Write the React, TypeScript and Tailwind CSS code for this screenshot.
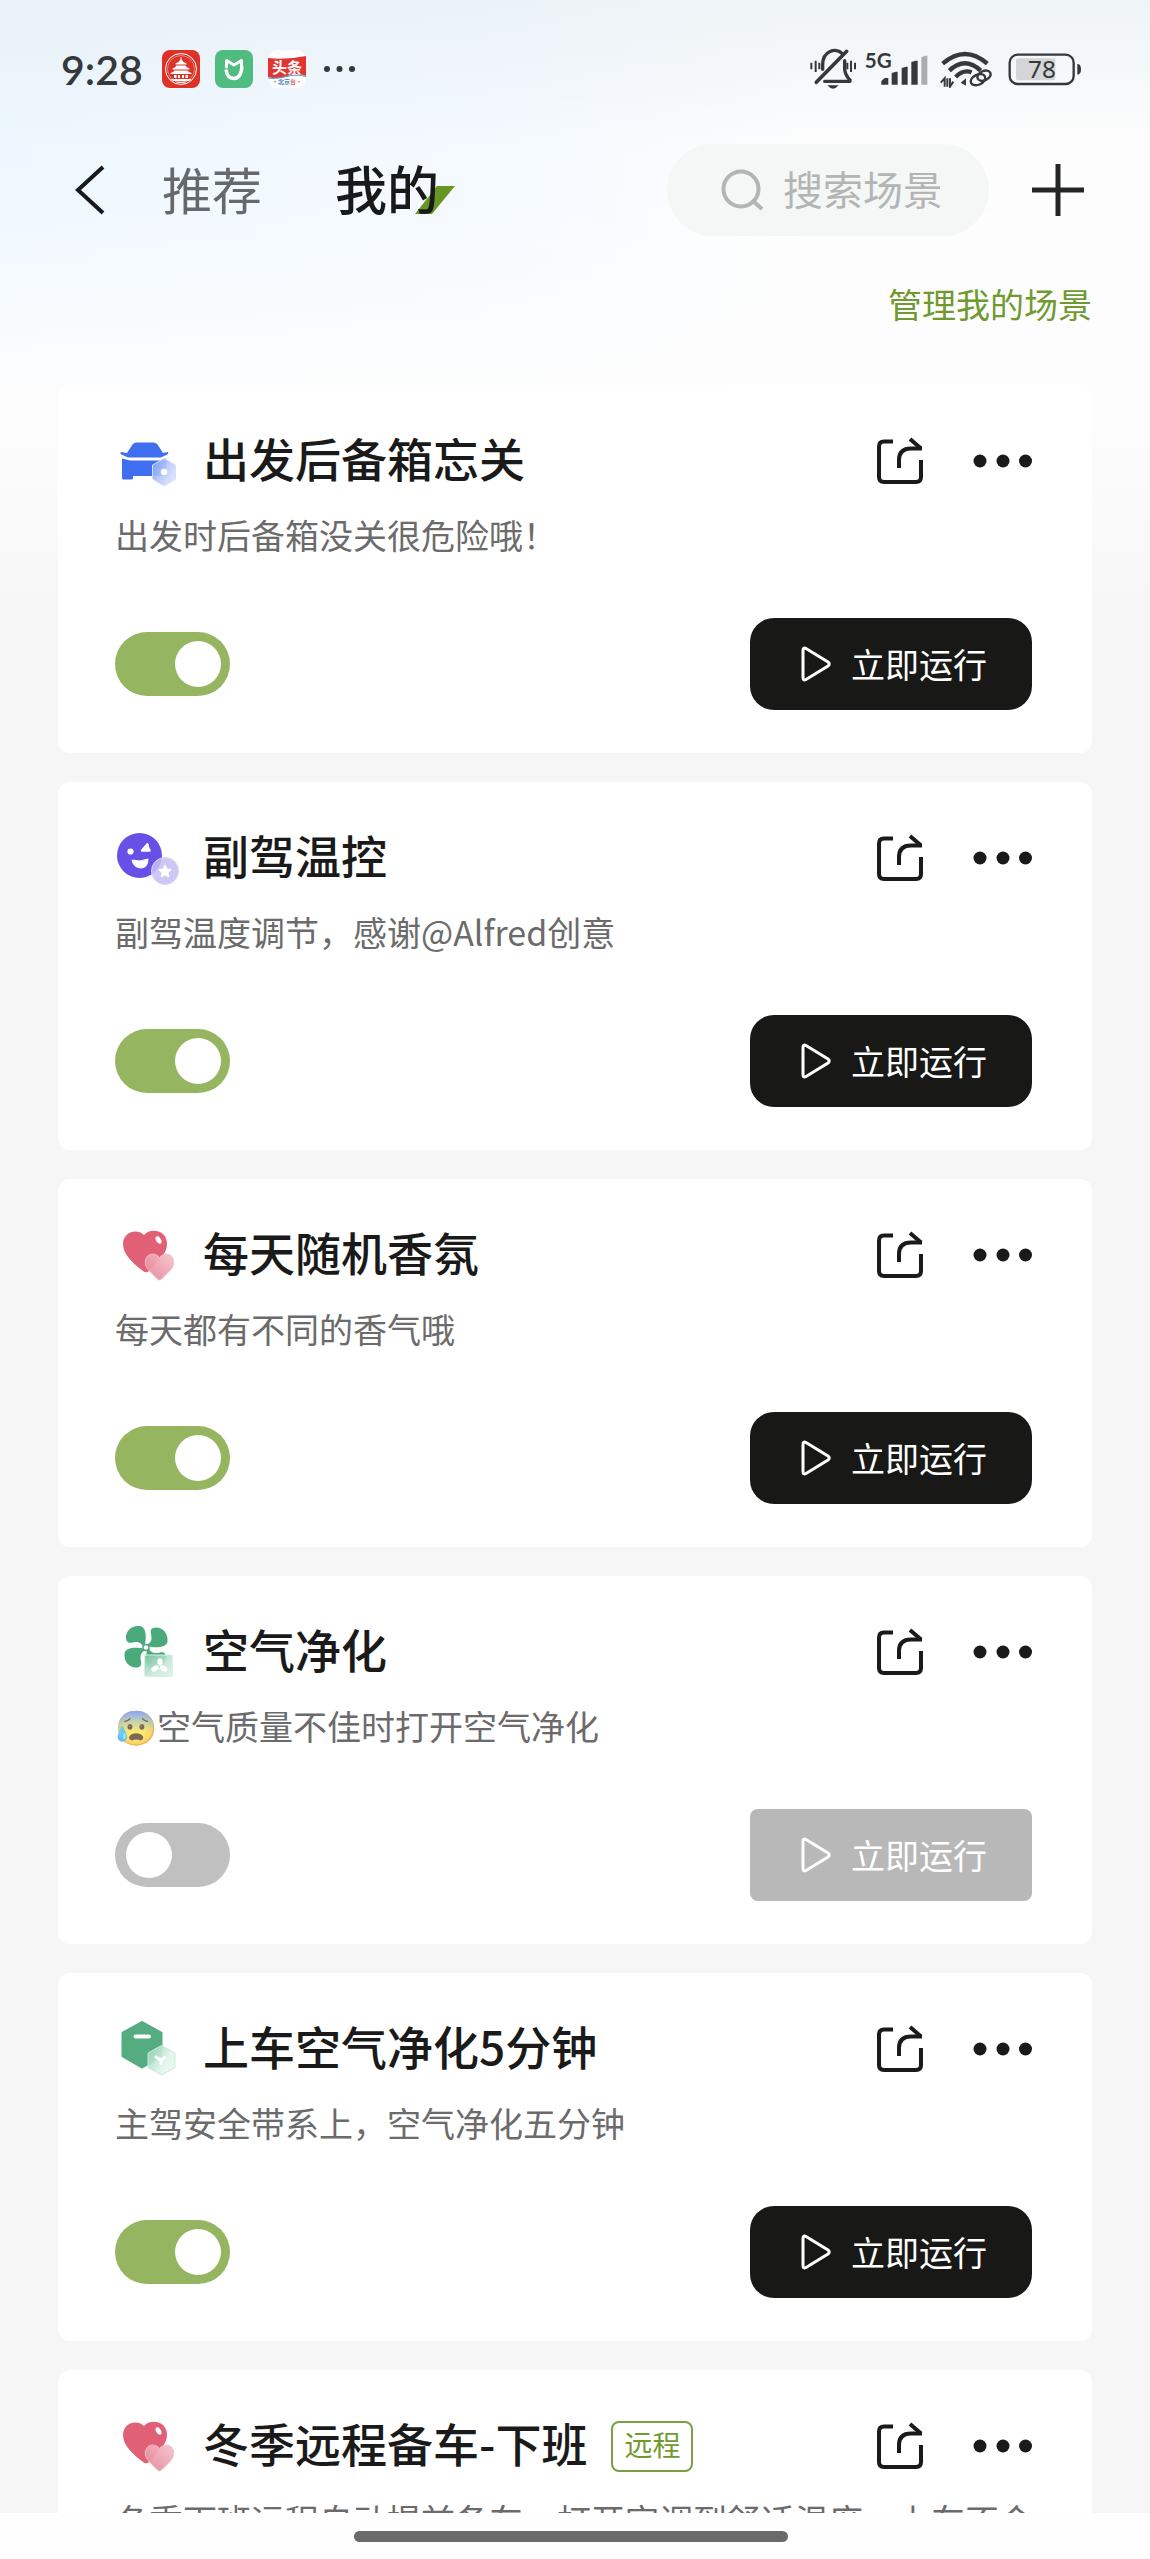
import React from "react";

type IconName = "car" | "face" | "heart" | "fan" | "box";

interface Scene {
  id: number;
  icon: IconName;
  title: string;
  emoji?: string;
  description: string;
  enabled: boolean;
  remote?: boolean;
}

const scenes: Scene[] = [
  { id: 1, icon: "car", title: "出发后备箱忘关", description: "出发时后备箱没关很危险哦！", enabled: true },
  { id: 2, icon: "face", title: "副驾温控", description: "副驾温度调节，感谢@Alfred创意", enabled: true },
  { id: 3, icon: "heart", title: "每天随机香氛", description: "每天都有不同的香气哦", enabled: true },
  { id: 4, icon: "fan", title: "空气净化", emoji: "😰", description: "空气质量不佳时打开空气净化", enabled: false },
  { id: 5, icon: "box", title: "上车空气净化5分钟", description: "主驾安全带系上，空气净化五分钟", enabled: true },
  {
    id: 6,
    icon: "heart",
    title: "冬季远程备车-下班",
    description: "冬季下班远程自动提前备车，打开空调到舒适温度，上车不会",
    enabled: true,
    remote: true,
  },
];

const CarIcon = () => (
  <>
    <defs>
      <linearGradient id="car-badge" x1="0" y1="0" x2="1" y2="0.6">
        <stop offset="0" stopColor="#7ea0f6" />
        <stop offset="0.6" stopColor="#b9c9fa" />
        <stop offset="1" stopColor="#dbe3fd" />
      </linearGradient>
    </defs>
    <path
      fill="#3f6ff0"
      d="M22 9.500h16q4 0 5.500 3.500L48 20l5-1q1 1.600-.8 2.600L46 24.500H13L6.500 21.600q-1.800-1-.8-2.600L12 20l4.500-7q1.500-3.500 5.500-3.500z"
    />
    <path fill="#3f6ff0" d="M7 25.500L15 27.500H44L51.500 25.500V43H18V45q0 1.500-1.500 1.500H8.500Q7 46.500 7 45z" />
    <path
      d="M49 25.500L60.500 32V46L49 53L37.500 46V32z"
      fill="url(#car-badge)"
      fillOpacity="0.92"
      stroke="#d5defc"
      strokeLinejoin="round"
    />
    <circle cx="49" cy="39" r="3.200" fill="#fff" />
  </>
);

const FaceIcon = () => (
  <>
    <circle cx="24.500" cy="25.500" r="22.500" fill="#6650e6" />
    <circle cx="15.500" cy="21.500" r="3.100" fill="#fff" />
    <path d="M33 13.500L27 20.500H35.500" fill="#fff" stroke="#fff" strokeWidth="2.400" strokeLinejoin="round" />
    <path d="M17 30q8 2.500 16-1q0 9-7.500 9Q18.500 37.500 17 30z" fill="#fff" stroke="#fff" strokeLinejoin="round" />
    <circle cx="50" cy="41" r="13.500" fill="#c6bff2" fillOpacity="0.88" stroke="#d8d3f8" />
    <path
      d="M50 35.500l1.700 3.700 4 .5-3 2.800.8 4-3.500-2-3.500 2 .8-4-3-2.800 4-.5z"
      fill="#fff"
      stroke="#fff"
      strokeWidth="1.500"
      strokeLinejoin="round"
    />
  </>
);

const HeartIcon = () => (
  <>
    <defs>
      <linearGradient id="heart-badge" x1="0" y1="1" x2="1" y2="0">
        <stop offset="0" stopColor="#e58397" />
        <stop offset="1" stopColor="#f5c3cd" />
      </linearGradient>
    </defs>
    <path
      fill="#e06176"
      d="M29 8C33 3 43 2 48.500 7.500C53.500 13 53 22 48 28L34 44Q31.500 46.500 28 44C19 37 8 28 8 17C8 5 22 1 29 8z"
    />
    <ellipse cx="43.500" cy="13" rx="2.400" ry="4" fill="#fff" transform="rotate(-32 43.500 13)" />
    <path
      d="M44.500 30.500C48 26 55 26 57.500 30.500C60.500 36 57.500 41 54.500 44L46 52.500Q44.500 53.500 43 52.500L34.500 44C31.500 41 28.500 36 31.500 30.500C34 26 41 26 44.500 30.500z"
      fill="url(#heart-badge)"
      fillOpacity="0.94"
      stroke="#f3bcc7"
    />
  </>
);

const fanBlade =
  "M29.500 22C31.500 16 32 3 25 2C15 1 9 9.500 11.500 16.500C13.500 20.500 17 18 21 18C25 18 27 20 28.500 23z";

const FanIcon = () => (
  <>
    <defs>
      <linearGradient id="fan-badge" x1="0" y1="0" x2="1" y2="1">
        <stop offset="0" stopColor="#7cc5a4" />
        <stop offset="0.6" stopColor="#c9e8da" />
        <stop offset="1" stopColor="#dcf3e9" />
      </linearGradient>
    </defs>
    <g fill="#4aaa7c">
      <path d={fanBlade} />
      <path d={fanBlade} transform="rotate(90 31 23.500)" />
      <path d={fanBlade} transform="rotate(180 31 23.500)" />
      <path d={fanBlade} transform="rotate(270 31 23.500)" />
    </g>
    <circle cx="31" cy="23.500" r="3" fill="#fff" stroke="#4aaa7c" strokeWidth="1.500" />
    <rect
      x="29.500"
      y="31"
      width="28"
      height="21.500"
      rx="1.500"
      fill="url(#fan-badge)"
      fillOpacity="0.9"
      stroke="#d7f1e6"
    />
    <g fill="#fff">
      <ellipse cx="45" cy="38" rx="2.600" ry="3.800" />
      <ellipse cx="40" cy="44.500" rx="2.600" ry="4" transform="rotate(60 40 44.500)" />
      <ellipse cx="48.500" cy="44.500" rx="2.600" ry="4" transform="rotate(-60 48.500 44.500)" />
    </g>
  </>
);

const BoxIcon = () => (
  <>
    <defs>
      <linearGradient id="box-badge" x1="0" y1="0" x2="1" y2="0.700">
        <stop offset="0" stopColor="#8fcfae" />
        <stop offset="0.7" stopColor="#e0f5ea" />
        <stop offset="1" stopColor="#e9f9f1" />
      </linearGradient>
    </defs>
    <path
      d="M27 1.500L46 12V35L27 46L8 35V12z"
      fill="#55ac81"
      stroke="#55ac81"
      strokeWidth="3"
      strokeLinejoin="round"
    />
    <rect x="18.500" y="13.500" width="17.500" height="4" rx="2" fill="#fff" />
    <path
      d="M46.500 24.500L60 32V46.500L46.500 54L33 46.500V32z"
      fill="url(#box-badge)"
      fillOpacity="0.92"
      stroke="#c9ebda"
      strokeLinejoin="round"
    />
    <path d="M41 36l5 3.500 3.500-3M46 39.500v3" fill="none" stroke="#fff" strokeWidth="3" strokeLinecap="round" />
  </>
);

const sceneIcons: Record<IconName, React.FC> = {
  car: CarIcon,
  face: FaceIcon,
  heart: HeartIcon,
  fan: FanIcon,
  box: BoxIcon,
};

const StatusBar = () => (
  <div className="flex h-36 items-center justify-between pr-[69px] pb-1.5 pl-[61px] text-[#35393c]">
    <div className="flex items-center gap-[15px]">
      <span className="mr-1 font-['Lato','Noto_Sans',sans-serif] text-[41px] leading-none font-semibold">9:28</span>
      <svg viewBox="0 0 38 38" className="size-[38px]" aria-hidden="true">
        <rect width="38" height="38" rx="8" fill="#dc3227" />
        <circle cx="19" cy="19" r="15.500" fill="none" stroke="#fff" strokeWidth="1" />
        <circle cx="19" cy="19" r="13.500" fill="none" stroke="#f3b4ae" strokeWidth="0.600" />
        <g fill="#fff">
          <path d="M18.500 7h1v2.500q1 2.500 5 4v1h-11v-1q4-1.500 5-4z" />
          <path d="M14.500 15.500h9q1 2 4 3v1h-17v-1q3-1 4-3z" />
          <path d="M12.500 20.500h13q1 1.500 4 2.500v1h-21v-1q3-1 4-2.500z" />
          <path d="M12 25h2.500v3H12zM16 25h2v3h-2zM20 25h2v3h-2zM23.500 25H26v3h-2.500zM8 29h22l-3 2H11zM12.500 31.800h13q-6 2.500-13 0z" />
        </g>
      </svg>
      <svg viewBox="0 0 38 38" className="size-[38px]" aria-hidden="true">
        <rect width="38" height="38" rx="8" fill="#50bd80" />
        <path
          d="M11.500 17V10.500L19 15L26.500 10.500V17"
          fill="none"
          stroke="#fff"
          strokeWidth="3"
          strokeLinejoin="round"
          strokeLinecap="round"
        />
        <path d="M11 19.500Q12 28.500 19 28.500T27 16" fill="none" stroke="#fff" strokeWidth="3.400" />
      </svg>
      <svg viewBox="0 0 38 38" className="size-[38px]" aria-hidden="true">
        <rect width="38" height="38" rx="9" fill="#fdfdfd" />
        <path d="M0 8Q19 10 38 6V26Q28 22 19 26T0 27z" fill="#e2352f" />
        <path d="M0 28Q10 29 19 26.500T38 26.500" fill="none" stroke="#5c9fd8" strokeWidth="1.200" />
        <text x="19" y="23" textAnchor="middle" fontSize="15" fontWeight="700" fill="#fff">
          头条
        </text>
        <text x="19" y="34" textAnchor="middle" fontSize="6" fontWeight="700" fill="#4a87c4">
          ·北京<tspan fill="#dd6a6a">台·</tspan>
        </text>
      </svg>
      <svg viewBox="0 0 38 8" className="ml-0.5 h-2 w-[38px]" fill="currentColor" aria-hidden="true">
        <circle cx="4" cy="4" r="3" />
        <circle cx="16.500" cy="4" r="3" />
        <circle cx="29" cy="4" r="3" />
      </svg>
    </div>

    <div className="flex items-center gap-2">
      <svg viewBox="42 54 156 126" className="h-[42px] w-[52px] overflow-visible" aria-hidden="true">
        <g fill="none" stroke="currentColor" strokeWidth="10" strokeLinecap="round" strokeLinejoin="round">
          <path d="M98 118V104C98 62 138 52 156 70" />
          <path d="M164 92V118Q166 136 180 150V154H104" />
          <path d="M79 157L170 64" strokeWidth="11" />
        </g>
        <path d="M112 166h34q-17 20-34 0z" fill="currentColor" />
        <path
          d="M64 98V118M77 92V126M88 98V118M172 98V118M183 92V126M195 98V118"
          stroke="currentColor"
          strokeWidth="6"
        />
      </svg>
      <svg
        viewBox="222 45 204 138"
        className="h-[46px] w-[68px] overflow-visible"
        fill="currentColor"
        aria-label="5G"
      >
        <text x="224" y="110" fontSize="62" fontWeight="700" fontFamily="Lato, 'Noto Sans', sans-serif">
          5G
        </text>
        <path d="M274 150L284 141H295V161H274z" />
        <path d="M305 126L318 122H323V161H305z" />
        <path d="M335 111L348 107H353V161H335z" />
        <path d="M364 93L377 89H383V161H364z" />
        <path d="M394 79L406 74H412V161H394z" fill="#a9adae" />
      </svg>
      <svg viewBox="450 60 171 114" className="h-[38px] w-[57px]" aria-hidden="true">
        <g fill="none" stroke="currentColor" strokeWidth="13">
          <path d="M458 101Q525 43 592 101" />
          <path d="M478 122Q525 78 572 122" />
          <path d="M497 141Q520 117 545 127" />
        </g>
        <path d="M512 158L528 145V167z" fill="currentColor" />
        <path d="M452 158L464 145V170M472 145V170M480 145V170L490 155" fill="none" stroke="currentColor" strokeWidth="6" />
        <g fill="none" stroke="currentColor" strokeWidth="7">
          <ellipse cx="564" cy="149" rx="23" ry="15" transform="rotate(-25 564 149)" />
          <ellipse cx="582" cy="137" rx="21" ry="14" transform="rotate(-25 582 137)" />
        </g>
      </svg>
      <svg viewBox="645 66 228 99" className="h-[33px] w-[76px]" aria-label="78%">
        <rect x="678" y="82" width="118" height="66" rx="6" fill="#d3d5d6" />
        <rect x="659" y="71" width="192" height="88" rx="24" fill="none" stroke="currentColor" strokeWidth="7" />
        <path d="M862 99q11 0 11 16t-11 16z" fill="currentColor" />
        <text
          x="756"
          y="141"
          textAnchor="middle"
          fontSize="73"
          fontWeight="400"
          fill="currentColor"
          fontFamily="'Noto Sans', sans-serif"
        >
          78
        </text>
      </svg>
    </div>
  </div>
);

const Header = () => (
  <header className="flex h-[92px] items-center pr-[63px] pl-[72px]">
    <button type="button" aria-label="返回">
      <svg viewBox="0 0 36 50" className="h-[50px] w-9" aria-hidden="true">
        <path d="M31 2L6 25L31 48" fill="none" stroke="#17191a" strokeWidth="4" />
      </svg>
    </button>
    <nav className="ml-[54px] flex items-center gap-[73px] pb-1">
      <button type="button" className="text-[50px] leading-[60px] text-[#66696b]">
        推荐
      </button>
      <button type="button" className="relative text-[52px] leading-[60px] font-medium text-[#17191a]">
        <svg viewBox="0 0 40 28" className="absolute -right-4 bottom-1 h-7 w-10" aria-hidden="true">
          <path d="M22 0H40L17 28H0z" fill="#679624" />
        </svg>
        <span className="relative">我的</span>
      </button>
    </nav>
    <label className="ml-auto flex h-full w-[322px] items-center gap-5 rounded-full bg-[#f5f6f6] pr-6 pl-[54px]">
      <svg
        viewBox="0 0 42 42"
        className="size-[42px] shrink-0"
        fill="none"
        stroke="#b3b4b4"
        strokeWidth="4"
        aria-hidden="true"
      >
        <circle cx="20" cy="20" r="17.500" />
        <path d="M31 31L41 40" />
      </svg>
      <input
        type="search"
        aria-label="搜索场景"
        placeholder="搜索场景"
        className="w-full min-w-0 bg-transparent pb-1 text-[40px] leading-[60px] outline-none placeholder:text-[#b3b4b4]"
      />
    </label>
    <button type="button" aria-label="新建场景" className="ml-10">
      <svg viewBox="0 0 58 58" className="size-[58px]" aria-hidden="true">
        <path d="M29 3V55M3 29H55" stroke="#242626" strokeWidth="5" />
      </svg>
    </button>
  </header>
);

const SceneCard: React.FC<{ scene: Scene }> = ({ scene }) => {
  const [enabled, setEnabled] = React.useState(scene.enabled);
  const Icon = sceneIcons[scene.icon];

  return (
    <article className="shrink-0 rounded-xl bg-white pt-12 pr-[60px] pb-[43px] pl-[57px]">
      <div className="flex h-14 items-center">
        <svg viewBox="0 0 64 56" className="h-14 w-16 shrink-0" aria-hidden="true">
          <Icon />
        </svg>
        <h2 className="ml-6 self-start text-[46px] leading-[48px] font-medium whitespace-nowrap text-[#1a1a1a]">
          {scene.title}
        </h2>
        {scene.remote && (
          <span className="ml-6 rounded-lg border-2 border-[#7b9f45] px-[11px] pb-1 text-[28px] leading-[43px] text-[#6f9a2f]">
            远程
          </span>
        )}
        <button type="button" aria-label="分享" className="ml-auto">
          <svg viewBox="0 0 48 48" className="size-12" fill="none" stroke="#1a1a1a" strokeWidth="4" aria-hidden="true">
            <path d="M17 4.500H8Q3 4.500 3 9.500V40Q3 45 8 45H40Q45 45 45 40V23" />
            <path d="M23 31V23Q23 11.500 35 11.500H46" />
            <path d="M34 2L45 11.500" />
          </svg>
        </button>
        <button type="button" aria-label="更多" className="ml-12">
          <svg viewBox="0 0 60 16" className="h-4 w-[60px]" fill="#1a1a1a" aria-hidden="true">
            <circle cx="8" cy="8" r="6.500" />
            <circle cx="31" cy="8" r="6.500" />
            <circle cx="53.500" cy="8" r="6.500" />
          </svg>
        </button>
      </div>
      <p className="mt-[22px] text-[34px] leading-[48px] whitespace-nowrap text-[#6b6b6b]">
        {scene.emoji && <span className="opacity-70">{scene.emoji}</span>}
        {scene.description}
      </p>
      <div className="mt-[59px] flex items-center justify-between">
        <input
          type="checkbox"
          aria-label={scene.title}
          checked={enabled}
          onChange={e => setEnabled(e.target.checked)}
          className="flex h-16 w-[115px] appearance-none items-center rounded-full bg-[#c0c0c0] before:ml-[11px] before:size-[46px] before:rounded-full before:bg-white checked:bg-[#96b560] checked:before:ml-[60px]"
        />
        <button
          type="button"
          disabled={!enabled}
          className="flex h-[92px] w-[282px] items-center justify-center gap-5 rounded-3xl bg-[#181816] pl-1.5 text-[34px] leading-[48px] text-white disabled:rounded-lg disabled:bg-[#b8b8b8]"
        >
          <svg viewBox="0 0 30 36" className="h-9 w-[30px]" aria-hidden="true">
            <path
              d="M2 4.500Q2 1 5 2.500L27 16Q29.500 18 27 20L5 33.500Q2 35 2 31.500z"
              fill="none"
              stroke="currentColor"
              strokeWidth="3"
            />
          </svg>
          立即运行
        </button>
      </div>
    </article>
  );
};

export default function App() {
  return (
    <div className="flex h-screen flex-col overflow-hidden bg-[#f6f6f6] bg-[linear-gradient(to_bottom,#e9f0f4b3,transparent_150px),linear-gradient(to_bottom,transparent,#ffffff33_200px,#fdfdfd_400px,#f6f6f6_640px),linear-gradient(to_right,#ebf6ff,#f3f9ff_45%,#fdfdfd_70%)] font-['Noto_Sans_CJK_SC',sans-serif]">
      <StatusBar />
      <Header />
      <div className="flex h-[149px] shrink-0 items-center justify-end pr-[58px] pb-3.5">
        <a href="#manage" className="text-[34px] leading-[48px] text-[#6f9a2f]">
          管理我的场景
        </a>
      </div>
      <main className="flex min-h-0 flex-1 flex-col gap-[29px] overflow-hidden px-[58px]">
        {scenes.map(scene => (
          <SceneCard key={scene.id} scene={scene} />
        ))}
      </main>
      <footer className="flex h-[46px] shrink-0 items-center justify-center bg-[#fefefe] pr-2">
        <div className="h-[11px] w-[38%] rounded-full bg-[#6a6a6a]" />
      </footer>
    </div>
  );
}
